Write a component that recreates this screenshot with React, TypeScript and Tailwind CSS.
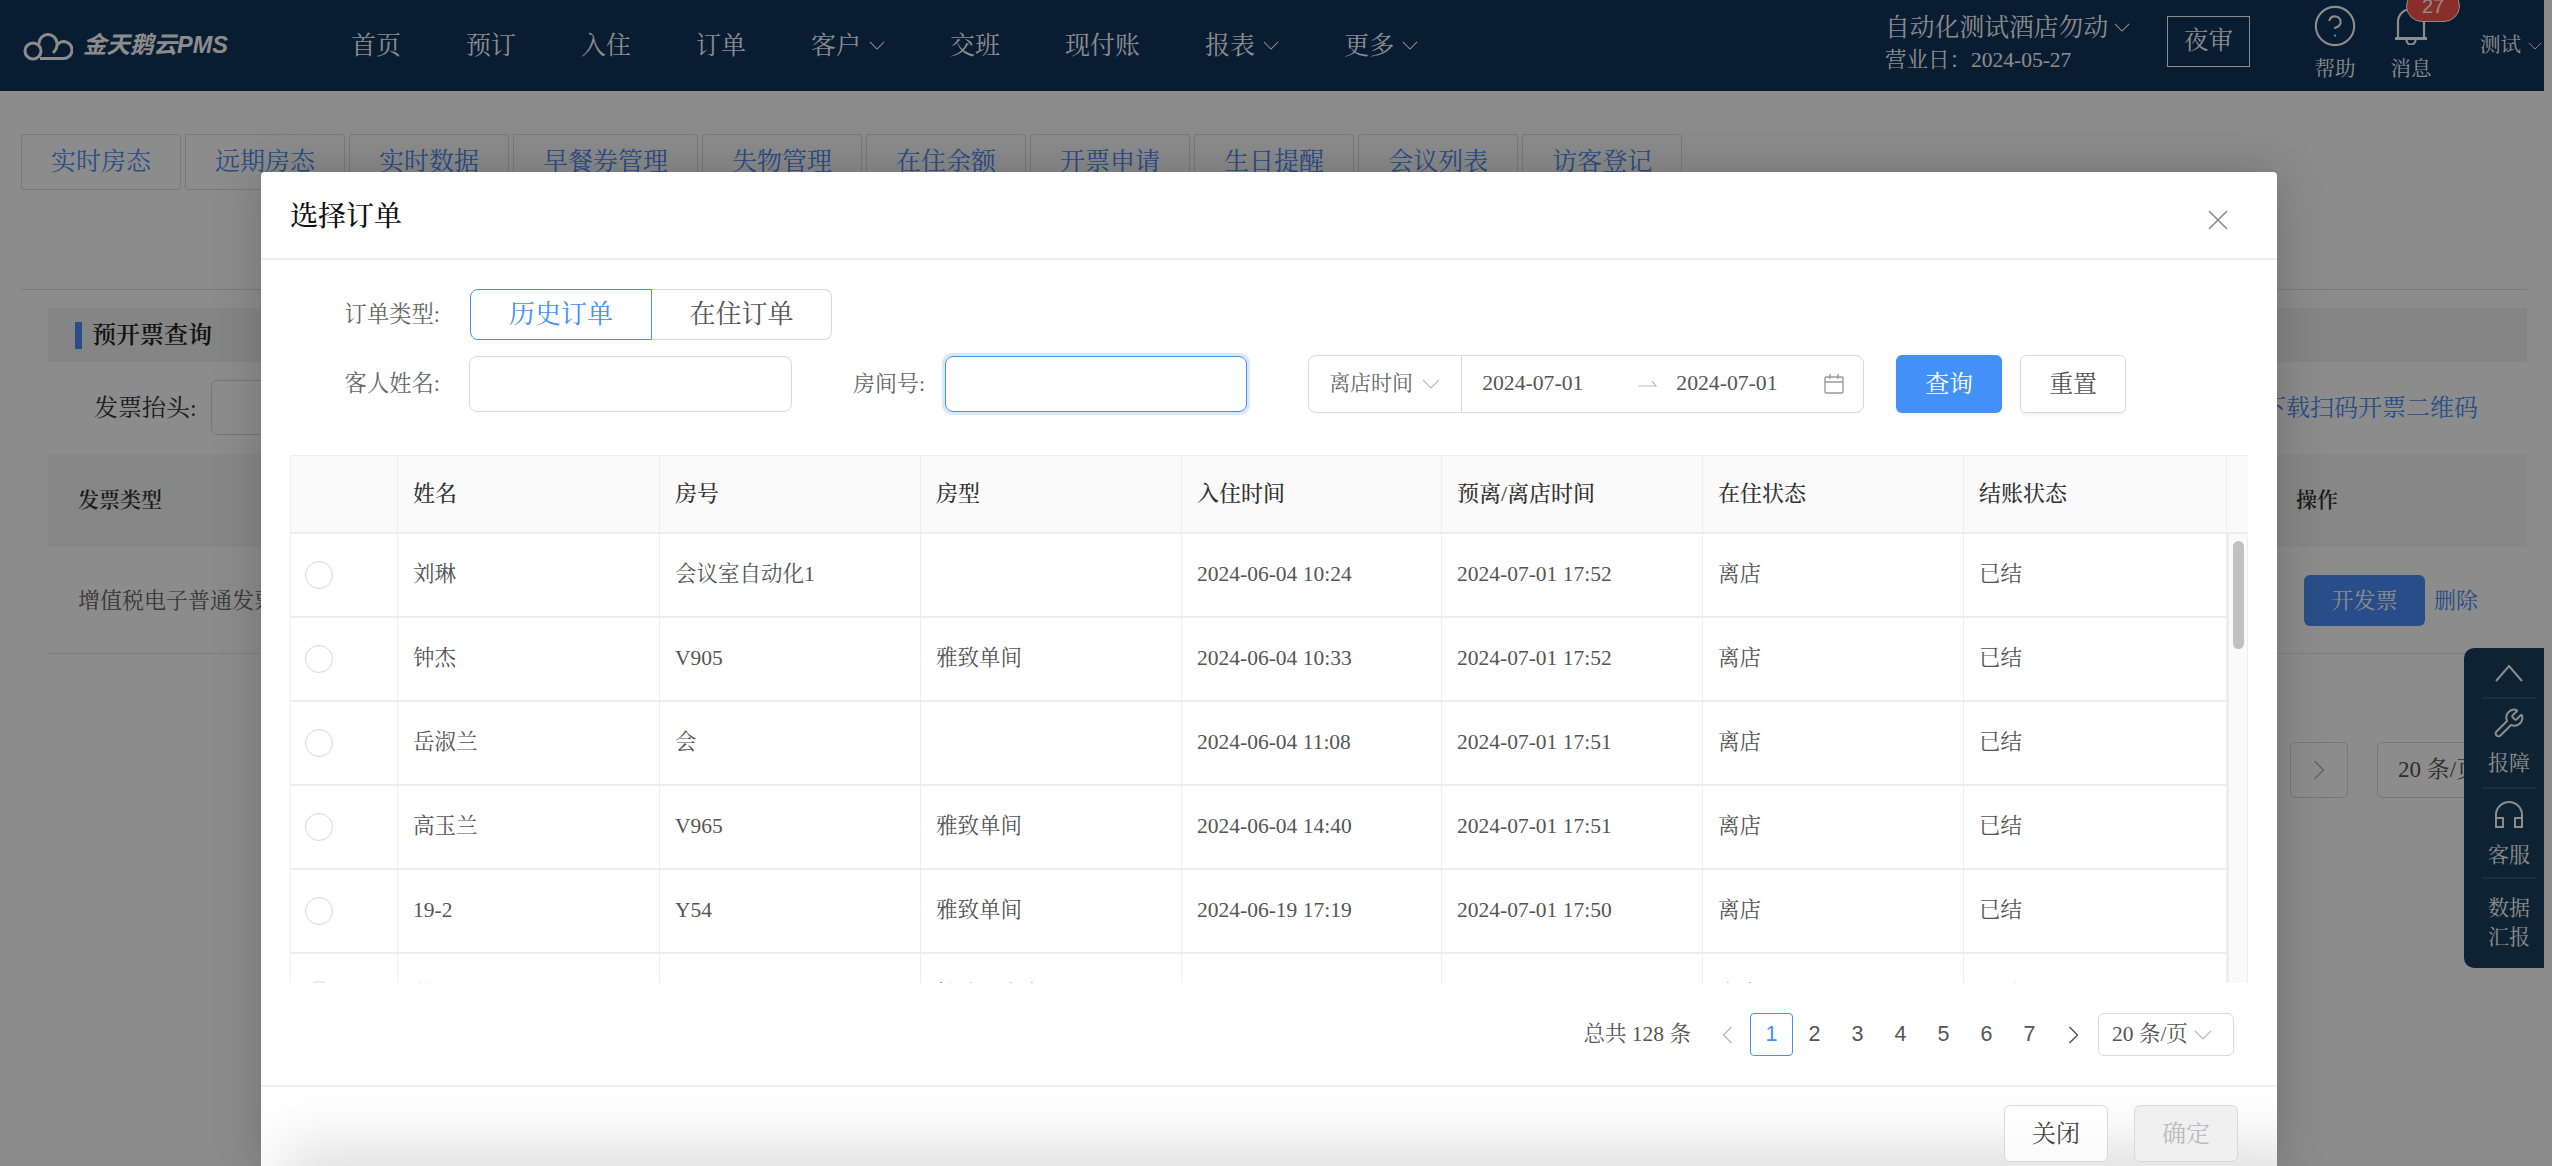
import React from 'react';
import { Wrench, CircleHelp } from 'lucide-react';

const navItems = [
  { label: '首页' },
  { label: '预订' },
  { label: '入住' },
  { label: '订单' },
  { label: '客户', arrow: true },
  { label: '交班' },
  { label: '现付账' },
  { label: '报表', arrow: true },
  { label: '更多', arrow: true },
];

const tabs = ['实时房态', '远期房态', '实时数据', '早餐券管理', '失物管理', '在住余额', '开票申请', '生日提醒', '会议列表', '访客登记'];

const columns = ['', '姓名', '房号', '房型', '入住时间', '预离/离店时间', '在住状态', '结账状态'];

const rows = [
  ['刘琳', '会议室自动化1', '', '2024-06-04 10:24', '2024-07-01 17:52', '离店', '已结'],
  ['钟杰', 'V905', '雅致单间', '2024-06-04 10:33', '2024-07-01 17:52', '离店', '已结'],
  ['岳淑兰', '会', '', '2024-06-04 11:08', '2024-07-01 17:51', '离店', '已结'],
  ['高玉兰', 'V965', '雅致单间', '2024-06-04 14:40', '2024-07-01 17:51', '离店', '已结'],
  ['19-2', 'Y54', '雅致单间', '2024-06-19 17:19', '2024-07-01 17:50', '离店', '已结'],
  ['黄丽', '', '精致大床房', '2024-06-20 09:12', '2024-07-01 17:48', '离店', '已结'],
];

const Chevron = ({ className = '' }: { className?: string }) => (
  <svg viewBox="0 0 18 10" className={className} fill="none" stroke="currentColor" strokeWidth="1.2">
    <path d="M1 1l8 8 8-8" />
  </svg>
);

const Caret = ({ dir, className = '' }: { dir: 'left' | 'right'; className?: string }) => (
  <svg viewBox="0 0 12 20" className={className} fill="none" stroke="currentColor" strokeWidth="1.6">
    <path d={dir === 'left' ? 'M10.5 1L1.5 10l9 9' : 'M1.5 1l9 9-9 9'} />
  </svg>
);

const Logo = () => (
  <svg viewBox="0 0 50 30" className="w-[50px] h-[30px]" fill="none" stroke="#fff" strokeWidth="3">
    <circle cx="10" cy="20" r="8" />
    <path d="M17 27.5H40a8.5 8.5 0 0 0 1-17c-3 0-5 1-6.5 3" />
    <path d="M16 13a9 9 0 0 1 18-1c.5 4-2 8-4 10" />
  </svg>
);

const Headphones = () => (
  <svg viewBox="0 0 30 30" className="w-[30px] h-[30px]" fill="none" stroke="#fff" strokeWidth="2">
    <path d="M2 27V15a13 13 0 0 1 26 0v12" />
    <rect x="2" y="18" width="7" height="9" />
    <rect x="21" y="18" width="7" height="9" />
  </svg>
);

const BellIcon = () => (
  <svg viewBox="0 0 34 40" className="w-[34px] h-[40px] mt-[2px]" fill="none" stroke="#fff" strokeWidth="2.2">
    <path d="M4 33V17a13 13 0 0 1 26 0v16" />
    <path d="M1 33.5h32" strokeWidth="3" />
    <path d="M12.5 35a4.5 4.5 0 0 0 9 0" />
  </svg>
);

const Page = () => (
  <div className="w-[2544px] min-h-[1166px] bg-white">
    <header className="h-[91px] bg-[#10335b] flex items-center text-white">
      <div className="flex items-center w-[351px] pl-[23px]">
        <Logo />
        <span className="ml-[10px] text-[23.5px] font-bold italic text-white font-['Liberation_Sans','Noto_Sans_CJK_SC',sans-serif]">金天鹅云PMS</span>
      </div>
      <nav className="flex gap-[65px] text-[25px]">
        {navItems.map((n) => (
          <div key={n.label} className="flex items-center">
            <span>{n.label}</span>
            {n.arrow && <Chevron className="w-[16px] h-[9px] ml-[8px]" />}
          </div>
        ))}
      </nav>
      <div className="ml-auto flex items-center">
        <div className="w-[282px] -ml-[3px] -mt-[6px]">
          <div className="flex items-center text-[24.8px] leading-[34px]">
            自动化测试酒店勿动
            <Chevron className="w-[16px] h-[9px] ml-[6px]" />
          </div>
          <div className="text-[21.5px] leading-[30px]">营业日：2024-05-27</div>
        </div>
        <div className="w-[83px] h-[51px] border border-white flex items-center justify-center text-[24.5px] -mt-[9px]">夜审</div>
        <div className="ml-[64px] flex flex-col items-center w-[42px]">
          <div className="-mt-[7px] mb-[7px] h-[46px]">
            <CircleHelp className="w-[46px] h-[46px]" strokeWidth={1.1} />
          </div>
          <span className="text-[20.5px] leading-[26px]">帮助</span>
        </div>
        <div className="ml-[34px] relative flex flex-col items-center w-[42px]">
          <div className="-mt-[7px] mb-[7px] h-[46px]">
            <BellIcon />
          </div>
          <span className="text-[20.5px] leading-[26px]">消息</span>
          <span className="absolute left-[16px] -top-[20px] w-[54px] h-[32px] rounded-[20px] border border-white bg-[#fb554c] text-[20px] leading-[30px] text-center font-['Liberation_Sans',sans-serif]">27</span>
        </div>
        <div className="ml-[48px] flex items-center text-[20.5px] w-[64px]">
          测试
          <Chevron className="w-[14px] h-[8px] ml-[7px]" />
        </div>
      </div>
    </header>

    <main className="pl-[21px] pr-[17px] pt-[43px]">
      <div className="flex gap-[4px]">
        {tabs.map((t) => (
          <div key={t} className="h-[56px] px-[29px] border border-[#dcdcdc] rounded-[3px] flex items-center text-[25px] text-[#4b8df8] whitespace-nowrap">{t}</div>
        ))}
      </div>
      <div className="mt-[99px] border-t border-[#dcdcdc] pl-[27px] pt-[18px]">
        <div className="h-[54px] bg-[#f2f2f2] flex items-center pl-[27px]">
          <span className="w-[7px] h-[27px] bg-[#4b8df8]" />
          <span className="ml-[10px] text-[24px] font-semibold text-[#222]">预开票查询</span>
        </div>
        <div className="mt-[18px] flex items-center h-[55px] pl-[46px]">
          <span className="text-[24px] text-[#333]">发票抬头:</span>
          <div className="ml-[14px] w-[300px] h-[55px] border border-[#d9d9d9] rounded-[6px]" />
          <span className="ml-auto mr-[49px] text-[24px] text-[#4b8df8]">下载扫码开票二维码</span>
        </div>
        <div className="mt-[19px] h-[93px] bg-[#f6f6f6] flex items-center pl-[30px] text-[21px] font-semibold text-[#333]">
          <span>发票类型</span>
          <span className="ml-auto w-[231px]">操作</span>
        </div>
        <div className="h-[107px] border-b border-[#e8e8e8] flex items-center pl-[30px] text-[22px] text-[#666]">
          <span>增值税电子普通发票</span>
          <div className="ml-auto w-[223px] flex items-center">
            <span className="w-[121px] h-[51px] rounded-[6px] bg-[#4b8df8] text-white flex items-center justify-center">开发票</span>
            <span className="ml-[9px] text-[#4b8df8]">删除</span>
          </div>
        </div>
        <div className="mt-[88px] flex justify-end pr-[10px]">
          <div className="w-[58px] h-[56px] border border-[#d9d9d9] rounded-[5px] flex items-center justify-center text-[#bbb]">
            <Caret dir="right" className="w-[12px] h-[20px]" />
          </div>
          <div className="ml-[29px] w-[140px] h-[56px] border border-[#d9d9d9] rounded-[5px] flex items-center pl-[20px] text-[23px] text-[#555] whitespace-nowrap">20 条/页</div>
        </div>
      </div>
    </main>
  </div>
);

const SidePanel = () => (
  <div className="absolute left-[2464px] top-[648px] w-[80px] h-[320px] rounded-l-[10px] bg-[#19415f] text-white text-[21px] flex flex-col items-center pl-[10px]">
    <div className="h-[49px] flex items-center justify-center">
      <svg viewBox="0 0 28 18" className="w-[28px] h-[18px]" fill="none" stroke="currentColor" strokeWidth="2"><path d="M1 17L14 2l13 15" /></svg>
    </div>
    <div className="w-[54px] h-[90px] border-t-2 border-[#2f536f] flex flex-col items-center">
      <Wrench className="w-[32px] h-[32px] mt-[8px]" strokeWidth={1.5} />
      <span className="mt-[10px] leading-[28px] whitespace-nowrap">报障</span>
    </div>
    <div className="w-[54px] h-[90px] border-t-2 border-[#2f536f] flex flex-col items-center">
      <div className="mt-[11px] h-[30px]"><Headphones /></div>
      <span className="mt-[11px] leading-[28px] whitespace-nowrap">客服</span>
    </div>
    <div className="w-[54px] border-t-2 border-[#2f536f] flex flex-col items-center pt-[15px] leading-[29px] whitespace-nowrap">
      <span>数据</span>
      <span>汇报</span>
    </div>
  </div>
);

const OrderTable = () => (
  <div className="mt-[43px] h-[528px] w-[1958px] overflow-hidden border-l border-t border-[#eeeeee]">
    <div className="grid grid-cols-[107px_262px_261px_261px_260px_261px_261px_263px] h-[78px] bg-[#fafafa] border-b-2 border-[#eeeeee]">
      {columns.map((c, i) => (
        <div key={i} className="border-r border-[#eeeeee] pl-[15px] flex items-center text-[22px] font-medium text-[#333] pb-[2px]">{c}</div>
      ))}
    </div>
    <div className="flex">
      <div className="w-[1936px]">
        {rows.map((r, i) => (
          <div key={i} className="grid grid-cols-[107px_262px_261px_261px_260px_261px_261px_263px] h-[84px] border-b-2 border-[#eeeeee] text-[21.5px] text-[#555]">
            <div className="border-r border-[#eeeeee] flex items-center pl-[14px]">
              <span className="w-[28px] h-[28px] rounded-full border border-[#d9d9d9]" />
            </div>
            {r.map((v, j) => (
              <div key={j} className="border-r border-[#eeeeee] pl-[15px] pb-[1px] flex items-center whitespace-nowrap">{v}</div>
            ))}
          </div>
        ))}
      </div>
      <div className="w-[21px] h-[450px] bg-[#fafafa] border-l-2 border-r border-[#eeeeee] pt-[7px] px-[4px]">
        <div className="w-[11px] h-[108px] rounded-full bg-[#c1c1c1]" />
      </div>
    </div>
  </div>
);

const Modal = () => (
  <div className="absolute left-[261px] top-[172px] w-[2016px] bg-white rounded-[4px] shadow-[0_0_50px_rgba(0,0,0,0.2)]">
    <div className="h-[88px] border-b-2 border-[#eeeeee] flex items-center pl-[29px] pr-[49px] justify-between">
      <span className="text-[28px] text-[#111] font-medium mt-[3px]">选择订单</span>
      <svg viewBox="0 0 20 20" className="w-[20px] h-[20px] mt-[10px] text-[#888]" fill="none" stroke="currentColor" strokeWidth="1.6"><path d="M1 1l18 18M19 1L1 19" /></svg>
    </div>

    <div className="pl-[29px] pr-[30px] pt-[29px]">
      <div className="flex items-center h-[51px]">
        <span className="w-[150px] text-right text-[22.3px] text-[#666]">订单类型:</span>
        <div className="ml-[30px] flex h-[51px] text-[26px]">
          <div className="w-[182px] rounded-l-[8px] border border-[#4390f8] text-[#4390f8] flex items-center justify-center">历史订单</div>
          <div className="w-[180px] rounded-r-[8px] border border-l-0 border-[#d9d9d9] text-[#555] flex items-center justify-center">在住订单</div>
        </div>
      </div>
      <div className="mt-[15px] flex items-center h-[57px]">
        <span className="w-[150px] text-right text-[22.3px] text-[#666]">客人姓名:</span>
        <div className="ml-[29px] w-[323px] h-[56px] border border-[#d9d9d9] rounded-[8px]" />
        <span className="ml-[61px] text-[22px] text-[#666]">房间号:</span>
        <div className="ml-[20px] w-[302px] h-[56px] border border-[#4390f8] rounded-[8px] shadow-[0_0_0_3px_#d9e8fd]" />
        <div className="ml-[61px] w-[556px] h-[58px] border border-[#d9d9d9] rounded-[8px] flex items-center text-[21.7px] text-[#555]">
          <div className="w-[153px] h-full border-r border-[#d9d9d9] flex items-center pl-[20px] text-[21px] text-[#666]">
            离店时间
            <Chevron className="w-[18px] h-[10px] ml-[9px] text-[#bbb]" />
          </div>
          <span className="ml-[20px]">2024-07-01</span>
          <svg viewBox="0 0 20 10" className="ml-[55px] w-[20px] h-[10px] text-[#bbb]" fill="none" stroke="currentColor" strokeWidth="1.2"><path d="M0 7h18l-4-5" /></svg>
          <span className="ml-[18px]">2024-07-01</span>
          <svg viewBox="0 0 20 20" className="ml-[46px] w-[20px] h-[20px] text-[#999]" fill="none" stroke="currentColor" strokeWidth="1.4"><rect x="1" y="3" width="18" height="16" rx="1" /><path d="M1 8h18M6 0v5M14 0v5" /></svg>
        </div>
        <button className="ml-[32px] w-[106px] h-[58px] rounded-[6px] bg-[#4390f8] text-white text-[24px] shadow-[0_3px_3px_rgba(0,0,0,0.05)]">查询</button>
        <button className="ml-[18px] w-[106px] h-[58px] rounded-[6px] border border-[#d9d9d9] text-[#555] text-[24px] shadow-[0_3px_3px_rgba(0,0,0,0.05)]">重置</button>
      </div>

      <OrderTable />

      <div className="h-[102px] pt-[30px] flex items-start justify-end pr-[13px] text-[21.5px] text-[#555]">
        <span className="h-[43px] leading-[43px]">总共 128 条</span>
        <div className="ml-[26px] w-[20px] h-[43px] flex items-center justify-center text-[#bbb]"><Caret dir="left" className="w-[11px] h-[18px]" /></div>
        <div className="ml-[13px] flex font-['Liberation_Sans',sans-serif]">
          <span className="w-[43px] h-[43px] rounded-[4px] border border-[#4390f8] text-[#4390f8] flex items-center justify-center">1</span>
          {[2, 3, 4, 5, 6, 7].map((p) => (
            <span key={p} className="w-[43px] h-[43px] flex items-center justify-center">{p}</span>
          ))}
        </div>
        <div className="ml-[12px] w-[20px] h-[43px] flex items-center justify-center"><Caret dir="right" className="w-[11px] h-[18px]" /></div>
        <div className="ml-[15px] w-[136px] h-[43px] rounded-[6px] border border-[#d9d9d9] flex items-center pl-[13px] whitespace-nowrap">
          20 条/页
          <Chevron className="w-[18px] h-[10px] ml-[6px] text-[#bbb]" />
        </div>
      </div>
    </div>

    <div className="relative h-[90px] border-t-2 border-[#eeeeee] overflow-hidden flex justify-end pt-[18px] pr-[39px] text-[24px]">
      <div className="absolute left-[60px] right-0 -bottom-[20px] h-[10px] shadow-[0_0_60px_40px_rgba(0,0,0,0.13)]" />
      <button className="relative w-[104px] h-[57px] rounded-[6px] border border-[#d9d9d9] bg-white/80 text-[#444]">关闭</button>
      <button className="relative ml-[26px] w-[104px] h-[57px] rounded-[6px] border border-[#d9d9d9] bg-[#f0f0f0] text-[#bbb]">确定</button>
    </div>
  </div>
);

export default function App() {
  return (
    <div className="relative w-[2552px] h-[1166px] overflow-hidden bg-white font-['Liberation_Serif','Noto_Serif_CJK_SC','Noto_Sans_CJK_SC',serif]">
      <Page />
      <SidePanel />
      <div className="absolute inset-0 bg-black/45" />
      <Modal />
    </div>
  );
}
